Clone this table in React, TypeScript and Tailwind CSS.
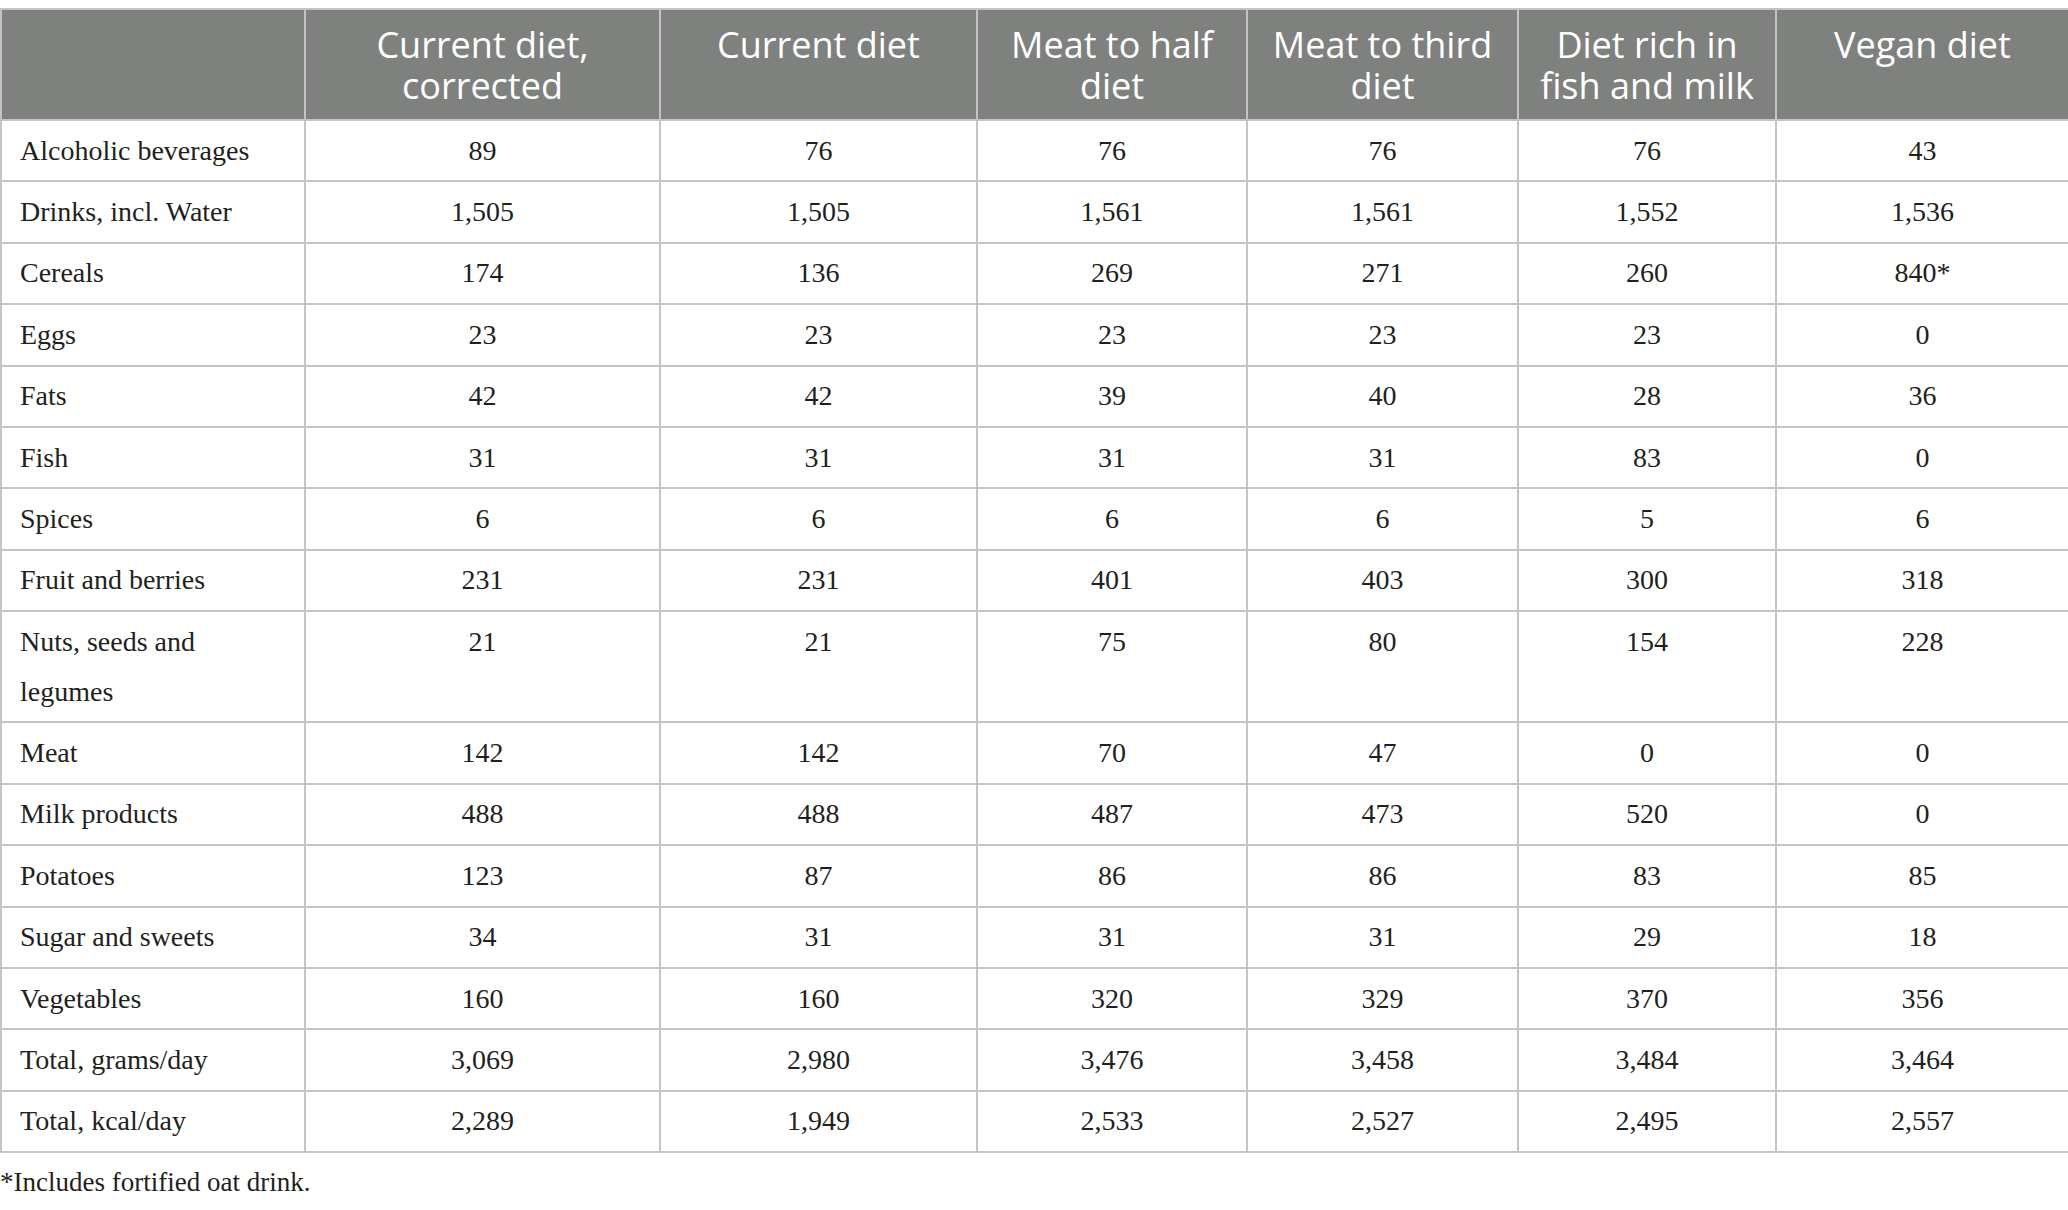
const headers: string[][] = [
  [],
  ['Current diet,', 'corrected'],
  ['Current diet'],
  ['Meat to half', 'diet'],
  ['Meat to third', 'diet'],
  ['Diet rich in', 'fish and milk'],
  ['Vegan diet'],
];

const widths = ['w-[304px]', 'w-[355px]', 'w-[317px]', 'w-[270px]', 'w-[271px]', 'w-[258px]', 'w-[293px]'];

const rows: string[][] = [
  ['Alcoholic beverages', '89', '76', '76', '76', '76', '43'],
  ['Drinks, incl. Water', '1,505', '1,505', '1,561', '1,561', '1,552', '1,536'],
  ['Cereals', '174', '136', '269', '271', '260', '840*'],
  ['Eggs', '23', '23', '23', '23', '23', '0'],
  ['Fats', '42', '42', '39', '40', '28', '36'],
  ['Fish', '31', '31', '31', '31', '83', '0'],
  ['Spices', '6', '6', '6', '6', '5', '6'],
  ['Fruit and berries', '231', '231', '401', '403', '300', '318'],
  ['Nuts, seeds and legumes', '21', '21', '75', '80', '154', '228'],
  ['Meat', '142', '142', '70', '47', '0', '0'],
  ['Milk products', '488', '488', '487', '473', '520', '0'],
  ['Potatoes', '123', '87', '86', '86', '83', '85'],
  ['Sugar and sweets', '34', '31', '31', '31', '29', '18'],
  ['Vegetables', '160', '160', '320', '329', '370', '356'],
  ['Total, grams/day', '3,069', '2,980', '3,476', '3,458', '3,484', '3,464'],
  ['Total, kcal/day', '2,289', '1,949', '2,533', '2,527', '2,495', '2,557'],
];

export default function App() {
  return (
    <div className="w-[2068px] h-[1210px] bg-white overflow-hidden pt-[8px]">
      <table className="w-[2068px] table-fixed border-collapse">
        <colgroup>
          {widths.map((w, i) => (
            <col key={i} className={w} />
          ))}
        </colgroup>
        <thead>
          <tr>
            {headers.map((h, i) => (
              <th
                key={i}
                className="bg-[#7f817f] border-2 border-[#c4c4c4] align-top text-center text-white font-normal text-[36px] leading-[41px] pt-[14px] pb-[13px] px-[8px] font-['Open_Sans',sans-serif]"
              >
                {h.map((line, j) => (
                  <div key={j}>{line}</div>
                ))}
              </th>
            ))}
          </tr>
        </thead>
        <tbody>
          {rows.map((r, i) => (
            <tr key={i}>
              {r.map((c, j) => (
                <td
                  key={j}
                  className={
                    "border-2 border-[#c4c4c4] align-top text-[28px] leading-[50px] py-[4.7px] text-[#231f20] font-['Liberation_Serif',serif] " +
                    (j === 0 ? 'text-left pl-[18px] pr-[20px]' : 'text-center px-[10px]')
                  }
                >
                  {c}
                </td>
              ))}
            </tr>
          ))}
        </tbody>
      </table>
      <p className="mt-[9px] text-[27px] leading-[40px] text-[#231f20] font-['Liberation_Serif',serif]">
        *Includes fortified oat drink.
      </p>
    </div>
  );
}
